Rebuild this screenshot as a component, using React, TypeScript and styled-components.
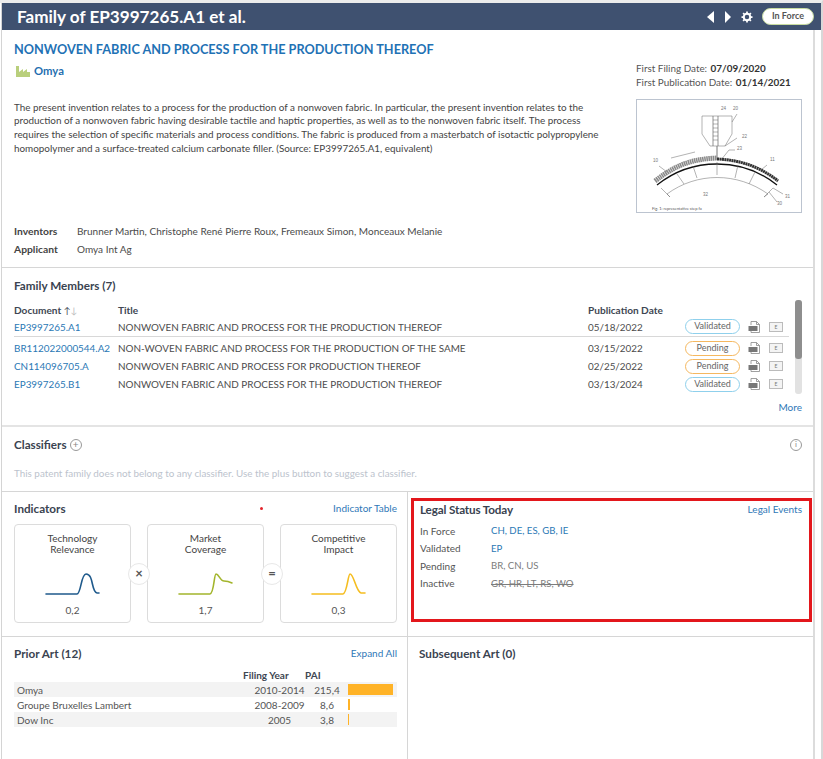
import React from "react";
import styled, {createGlobalStyle} from "styled-components";

const GlobalStyle = createGlobalStyle`
  html, body {
    margin: 0;
    padding: 0;
    background: #fff;
  }
  body {
    font-family: Lato, "Open Sans", sans-serif;
    font-size: 10px;
    color: #4a4a4a;
    overflow: hidden;
  }
`;

const members = [
    {doc: "EP3997265.A1", title: "NONWOVEN FABRIC AND PROCESS FOR THE PRODUCTION THEREOF", date: "05/18/2022", status: "Validated"},
    {doc: "BR112022000544.A2", title: "NON-WOVEN FABRIC AND PROCESS FOR THE PRODUCTION OF THE SAME", date: "03/15/2022", status: "Pending"},
    {doc: "CN114096705.A", title: "NONWOVEN FABRIC AND PROCESS FOR PRODUCTION THEREOF", date: "02/25/2022", status: "Pending"},
    {doc: "EP3997265.B1", title: "NONWOVEN FABRIC AND PROCESS FOR THE PRODUCTION THEREOF", date: "03/13/2024", status: "Validated"},
];

const priorArt = [
    {name: "Omya", years: "2010-2014", pai: "215,4", bar: 45},
    {name: "Groupe Bruxelles Lambert", years: "2008-2009", pai: "8,6", bar: 2},
    {name: "Dow Inc", years: "2005", pai: "3,8", bar: 1},
];

const indicators = [
    {title: "Technology", sub: "Relevance", value: "0,2", color: "#1f5a8c", path: "M1 22 H32 C36 22 36 2 41 2 C49 2 46 20 52 21 H54"},
    {title: "Market", sub: "Coverage", value: "1,7", color: "#a3b52c", path: "M1 22 H32 C36 22 36 2 38 2 C41 2 42 9 46 9 C50 9 50 9 54 11"},
    {title: "Competitive", sub: "Impact", value: "0,3", color: "#f5bd1f", path: "M1 22 H32 C36 22 37 2 39 2 C43 2 45 20 50 21 H54"},
];

const drawingLabels = [
    {x: 84, y: 10, text: "24"},
    {x: 96, y: 10, text: "20"},
    {x: 105, y: 38, text: "22"},
    {x: 100, y: 50, text: "23"},
    {x: 16, y: 62, text: "10"},
    {x: 133, y: 61, text: "11"},
    {x: 66, y: 96, text: "32"},
    {x: 148, y: 98, text: "31"},
    {x: 140, y: 105, text: "30"},
];

const PdfIcon = () => (
    <svg width="13" height="14" viewBox="0 0 13 14" fill="none" stroke="#888" strokeWidth="0.8">
        <path d="M3 5V1.5H8.5L11.5 4.5V12.5H3V11"/>
        <path d="M8.5 1.5V4.5H11.5"/>
        <rect x="0.5" y="6" width="9" height="5" fill="#777" stroke="none"/>
    </svg>
);

const PatentDrawing = () => (
    <svg width="164" height="112" viewBox="0 0 164 112" fill="none" stroke="#666" strokeWidth="0.5">
        <path d="M65 16H95V34L88 46H73L65 34Z"/>
        <path d="M76 16V46M81 16V46" strokeWidth="0.7"/>
        <path d="M76 20H81M76 24H81M76 28H81M76 32H81M76 36H81M76 40H81"/>
        <path d="M80 46V60" strokeWidth="0.9"/>
        <path d="M84 60L92 50H98M88 46L100 38M95 22L100 14"/>
        <path d="M18 81C42 62 60 59 80 58" stroke="#8a8a8a" strokeWidth="5" strokeDasharray="1.6 0.5"/>
        <path d="M80 59C105 60 125 68 141 81" stroke="#333" strokeWidth="3" strokeDasharray="2 0.4"/>
        <path d="M20 85C55 57 105 57 140 85" stroke="#111" strokeWidth="1.3"/>
        <path d="M30 94C60 72 100 72 131 94"/>
        <path d="M24 88L33 97M40 74L47 84M56 66L60 78M80 62V75M101 65L98 78M118 72L112 84M136 88L127 97"/>
        <path d="M33 97L30 94M127 97L131 94"/>
        <path d="M34 58L58 52" strokeWidth="0.5"/>
        <path d="M22 66L30 72M130 65L124 70M136 88L146 94M132 92L140 102"/>
        {drawingLabels.map((l) => (
            <text key={l.text} x={l.x} y={l.y} fontSize="4.5" fill="#777" stroke="none" fontFamily="Liberation Sans, sans-serif">{l.text}</text>
        ))}
    </svg>
);

const App = () => {
    return (
        <Page>
            <GlobalStyle/>
            <Panel>
                <Header>
                    <HeaderTitle>Family of EP3997265.A1 et al.</HeaderTitle>
                    <HeaderTools>
                        <Arrow $left/>
                        <Arrow/>
                        <Gear viewBox="0 0 24 24" fill="none" stroke="#fff" strokeWidth="4">
                            <circle cx="12" cy="12" r="6.5"/>
                            <path d="M12 1V5M12 19V23M1 12H5M19 12H23M4.2 4.2L7 7M17 17L19.8 19.8M4.2 19.8L7 17M17 7L19.8 4.2" strokeWidth="3.5"/>
                        </Gear>
                        <StatusPill>In Force</StatusPill>
                    </HeaderTools>
                </Header>

                <Overview>
                    <OverviewMain>
                        <PatentTitle>NONWOVEN FABRIC AND PROCESS FOR THE PRODUCTION THEREOF</PatentTitle>
                        <Owner>
                            <svg width="14" height="11" viewBox="0 0 14 11" fill="#b9cf7c">
                                <path d="M0 0H3V6L7 3V6L11 3V6H14V11H0Z"/>
                            </svg>
                            Omya
                        </Owner>
                        <Abstract>
                            The present invention relates to a process for the production of a nonwoven fabric. In particular, the present invention relates to the production of a nonwoven fabric having desirable tactile and haptic properties, as well as to the nonwoven fabric itself. The process requires the selection of specific materials and process conditions. The fabric is produced from a masterbatch of isotactic polypropylene homopolymer and a surface-treated calcium carbonate filler. (Source: EP3997265.A1, equivalent)
                        </Abstract>
                        <Facts>
                            <FactLabel>Inventors</FactLabel>
                            <span>Brunner Martin, Christophe René Pierre Roux, Fremeaux Simon, Monceaux Melanie</span>
                            <FactLabel>Applicant</FactLabel>
                            <span>Omya Int Ag</span>
                        </Facts>
                    </OverviewMain>
                    <OverviewSide>
                        <DateLine>First Filing Date: <b>07/09/2020</b></DateLine>
                        <DateLine>First Publication Date: <b>01/14/2021</b></DateLine>
                        <Drawing>
                            <PatentDrawing/>
                            <DrawingCaption>Fig. 1: representative step fa</DrawingCaption>
                        </Drawing>
                    </OverviewSide>
                </Overview>

                <Members>
                    <SectionTitle>Family Members (7)</SectionTitle>
                    <TableWrap>
                        <MemberTable>
                            <HeadRow>
                                <span>Document <SortArrows>↑<i>↓</i></SortArrows></span>
                                <span>Title</span>
                                <span>Publication Date</span>
                            </HeadRow>
                            {members.map((m, i) => (
                                <MemberRow key={m.doc} $first={i === 0}>
                                    <DocLink>{m.doc}</DocLink>
                                    <span>{m.title}</span>
                                    <span>{m.date}</span>
                                    <StatusBadge $pending={m.status === "Pending"}>{m.status}</StatusBadge>
                                    <PdfIcon/>
                                    <EBox>E</EBox>
                                </MemberRow>
                            ))}
                        </MemberTable>
                        <ScrollTrack><ScrollThumb/></ScrollTrack>
                    </TableWrap>
                    <MoreRow><TextLink>More</TextLink></MoreRow>
                </Members>

                <Classifiers>
                    <ClassifierHead>
                        <SectionTitle>Classifiers</SectionTitle>
                        <RoundIcon>+</RoundIcon>
                        <InfoIcon>i</InfoIcon>
                    </ClassifierHead>
                    <Muted>This patent family does not belong to any classifier. Use the plus button to suggest a classifier.</Muted>
                </Classifiers>

                <TwoColumns>
                    <IndicatorPanel>
                        <PanelHead>
                            <SectionTitle>Indicators</SectionTitle>
                            <RedDot/>
                            <TextLink>Indicator Table</TextLink>
                        </PanelHead>
                        <Cards>
                            {indicators.map((item, i) => (
                                <React.Fragment key={item.title}>
                                    {i > 0 && <Operator>{i === 1 ? "×" : "="}</Operator>}
                                    <Card>
                                        <CardTitle>{item.title}<br/>{item.sub}</CardTitle>
                                        <Sparkline viewBox="0 0 60 25" fill="none">
                                            <path d={item.path} stroke={item.color} strokeWidth="1.6" strokeLinecap="round"/>
                                        </Sparkline>
                                        <CardValue>{item.value}</CardValue>
                                    </Card>
                                </React.Fragment>
                            ))}
                        </Cards>
                    </IndicatorPanel>
                    <LegalPanel>
                        <LegalBox>
                            <PanelHead>
                                <LegalTitle>Legal Status Today</LegalTitle>
                                <TextLink>Legal Events</TextLink>
                            </PanelHead>
                            <LegalGrid>
                                <span>In Force</span><LegalLink>CH, DE, ES, GB, IE</LegalLink>
                                <span>Validated</span><LegalLink>EP</LegalLink>
                                <span>Pending</span><LegalGrey>BR, CN, US</LegalGrey>
                                <span>Inactive</span><LegalGrey as="s">GR, HR, LT, RS, WO</LegalGrey>
                            </LegalGrid>
                        </LegalBox>
                    </LegalPanel>
                </TwoColumns>

                <BottomColumns>
                    <PriorPanel>
                        <PanelHead>
                            <SectionTitle>Prior Art (12)</SectionTitle>
                            <TextLink>Expand All</TextLink>
                        </PanelHead>
                        <PriorHead>
                            <span/>
                            <b>Filing Year</b>
                            <b>PAI</b>
                        </PriorHead>
                        {priorArt.map((p) => (
                            <PriorRow key={p.name}>
                                <span>{p.name}</span>
                                <PriorCell>{p.years}</PriorCell>
                                <PriorCell>{p.pai}</PriorCell>
                                <PaiBar style={{width: p.bar}}/>
                            </PriorRow>
                        ))}
                    </PriorPanel>
                    <SubsequentPanel>
                        <SectionTitle>Subsequent Art (0)</SectionTitle>
                    </SubsequentPanel>
                </BottomColumns>
            </Panel>
        </Page>
    );
};

export default App;

const Page = styled.div`
  width: 823px;
  height: 759px;
  border-top: 3px solid #ececec;
  border-right: 2px solid #d8d8d8;
  padding-left: 1px;
  box-sizing: border-box;
  overflow: hidden;
`;

const Panel = styled.div`
  width: 811px;
  height: 756px;
  border-left: 1px solid #d4d4d4;
  border-right: 2px solid #dcdcdc;
`;

const Header = styled.div`
  height: 27px;
  width: 821px;
  background: #3f5170;
  display: flex;
  align-items: center;
  justify-content: space-between;
  padding: 0 9px 0 15px;
  box-sizing: border-box;
`;

const HeaderTitle = styled.div`
  font-size: 17.1px;
  font-weight: 700;
  color: #fff;
`;

const HeaderTools = styled.div`
  display: flex;
  align-items: center;
`;

const Arrow = styled.div<{$left?: boolean}>`
  width: 0;
  height: 0;
  border-top: 6px solid transparent;
  border-bottom: 6px solid transparent;
  margin-right: ${(p) => (p.$left ? "11px" : "10px")};
  ${(p) => (p.$left ? "border-right: 7px solid #fff;" : "border-left: 6px solid #fff;")}
`;

const Gear = styled.svg`
  width: 12px;
  height: 12px;
  margin-right: 9px;
`;

const StatusPill = styled.div`
  width: 52px;
  height: 17px;
  border-radius: 9px;
  background: #fff;
  border: 1.5px solid #c8dca0;
  box-sizing: border-box;
  font-size: 9px;
  font-weight: 700;
  color: #555;
  text-align: center;
  line-height: 13px;
`;

const Overview = styled.div`
  height: 237px;
  border-bottom: 1px solid #d6d6d6;
  display: flex;
  padding: 0 11px 0 12px;
`;

const OverviewMain = styled.div`
  flex: 1;
  display: flex;
  flex-direction: column;
  min-width: 0;
`;

const PatentTitle = styled.div`
  margin-top: 12px;
  font-size: 12.7px;
  font-weight: 700;
  line-height: 15px;
  color: #1f72b5;
  white-space: nowrap;
`;

const Owner = styled.div`
  margin-top: 7px;
  display: flex;
  align-items: center;
  gap: 4px;
  padding-left: 2px;
  font-size: 11.3px;
  font-weight: 700;
  line-height: 14px;
  color: #1f6fb0;
`;

const Abstract = styled.p`
  margin: 22.5px 0 0;
  width: 592px;
  font-size: 9.9px;
  line-height: 13.8px;
  color: #444;
`;

const Facts = styled.div`
  margin-top: auto;
  margin-bottom: 11px;
  display: grid;
  grid-template-columns: 63px 1fr;
  row-gap: 5px;
  font-size: 10px;
  word-spacing: 0.1px;
  line-height: 13px;
`;

const FactLabel = styled.span`
  font-size: 10.3px;
  font-weight: 700;
  color: #444;
`;

const OverviewSide = styled.div`
  width: 166px;
  padding-top: 32px;
`;

const DateLine = styled.div`
  font-size: 9.9px;
  line-height: 13.5px;
  white-space: nowrap;
  color: #555;
  b {
    color: #333;
    margin-left: 1px;
  }
`;

const Drawing = styled.div`
  position: relative;
  margin-top: 10px;
  width: 166px;
  height: 114px;
  border: 1px solid #bcc4d0;
  box-sizing: border-box;
`;

const DrawingCaption = styled.span`
  position: absolute;
  left: 15px;
  bottom: 1px;
  font-size: 4px;
  color: #555;
`;

const SectionTitle = styled.div`
  font-size: 11.7px;
  font-weight: 700;
  line-height: 15px;
  color: #3a4350;
  white-space: nowrap;
`;

const LegalTitle = styled(SectionTitle)`
  letter-spacing: -0.15px;
`;

const Members = styled.div`
  height: 159px;
  border-bottom: 2px solid #e4e4e4;
  padding: 10px 11px 0 12px;
  box-sizing: border-box;
`;

const TableWrap = styled.div`
  display: flex;
  justify-content: space-between;
  margin-top: 10px;
`;

const MemberTable = styled.div`
  width: 775px;
  font-size: 9.9px;
`;

const HeadRow = styled.div`
  display: grid;
  grid-template-columns: 104px 470px 1fr;
  height: 14px;
  line-height: 14px;
  font-size: 10.1px;
  font-weight: 700;
  color: #3e4652;
`;

const SortArrows = styled.span`
  font-weight: 400;
  font-size: 9px;
  i {
    font-style: normal;
    color: #bbb;
  }
`;

const MemberRow = styled.div<{$first?: boolean}>`
  display: grid;
  grid-template-columns: 104px 470px 97px 63px 21px 1fr;
  align-items: center;
  height: ${(p) => (p.$first ? "20px" : "18px")};
  box-sizing: border-box;
  ${(p) => (p.$first ? "border-bottom: 1px solid #d8d8d8; margin-bottom: 2px;" : "")}
  white-space: nowrap;
  color: #4c4c4c;
`;

const DocLink = styled.span`
  color: #2a78b5;
`;

const StatusBadge = styled.span<{$pending?: boolean}>`
  width: 55px;
  height: 15px;
  border-radius: 8px;
  box-sizing: border-box;
  border: 1.5px solid ${(p) => (p.$pending ? "#f5b860" : "#8fd0ec")};
  font-size: 9px;
  line-height: 12px;
  text-align: center;
  color: #666;
`;

const EBox = styled.span`
  width: 12px;
  height: 8px;
  border: 1px solid #bbb;
  background: #f4f4f4;
  font-size: 5px;
  line-height: 8px;
  text-align: center;
  color: #777;
`;

const ScrollTrack = styled.div`
  width: 7px;
  height: 94px;
  margin-top: -3px;
  background: #e2e2e2;
  border-radius: 3px;
`;

const ScrollThumb = styled.div`
  height: 59px;
  background: #8e8e8e;
  border-radius: 3px;
`;

const MoreRow = styled.div`
  display: flex;
  justify-content: flex-end;
  margin-top: 7px;
`;

const TextLink = styled.span`
  font-size: 10px;
  line-height: 13px;
  color: #2f78b7;
`;

const Classifiers = styled.div`
  height: 65px;
  border-bottom: 1px solid #d6d6d6;
  padding: 10px 11px 0 12px;
  box-sizing: border-box;
`;

const ClassifierHead = styled.div`
  display: flex;
  align-items: center;
  gap: 3px;
`;

const RoundIcon = styled.span`
  width: 10px;
  height: 10px;
  border: 1px solid #999;
  border-radius: 50%;
  font-size: 10px;
  line-height: 9px;
  text-align: center;
  color: #888;
`;

const InfoIcon = styled(RoundIcon)`
  margin-left: auto;
  font-size: 8px;
`;

const Muted = styled.div`
  margin-top: 15px;
  font-size: 9.85px;
  color: #bcc3cd;
  white-space: nowrap;
`;

const TwoColumns = styled.div`
  display: grid;
  grid-template-columns: 406px 1fr;
  height: 144px;
  border-bottom: 1px solid #d6d6d6;
`;

const IndicatorPanel = styled.div`
  border-right: 1px solid #d6d6d6;
  padding: 9px 10px 0 12px;
`;

const PanelHead = styled.div`
  display: flex;
  justify-content: space-between;
  align-items: center;
`;

const RedDot = styled.span`
  width: 3px;
  height: 3px;
  margin-left: 124px;
  border-radius: 50%;
  background: #e3242b;
`;

const Cards = styled.div`
  display: flex;
  align-items: center;
  margin-top: 8px;
`;

const Card = styled.div`
  width: 117px;
  height: 99px;
  box-sizing: border-box;
  border: 1px solid #dcdcdc;
  border-radius: 4px;
  padding-top: 8px;
  display: flex;
  flex-direction: column;
  align-items: center;
`;

const CardTitle = styled.div`
  height: 39px;
  font-size: 10px;
  line-height: 11px;
  text-align: center;
  color: #444;
`;

const Sparkline = styled.svg`
  width: 60px;
  height: 25px;
  margin-left: 4px;
`;

const CardValue = styled.div`
  margin-top: 7px;
  color: #555;
`;

const Operator = styled.div`
  width: 22px;
  height: 22px;
  margin: 0 -3px;
  z-index: 1;
  border-radius: 50%;
  background: #fff;
  border: 1px solid #e8e8e8;
  box-sizing: border-box;
  font-size: 13px;
  font-weight: 700;
  line-height: 19px;
  text-align: center;
  color: #555;
`;

const LegalPanel = styled.div`
  padding: 6px 1px 12px 3px;
`;

const LegalBox = styled.div`
  height: 124px;
  box-sizing: border-box;
  border: 3px solid #e3171c;
  padding: 1px 7px 0 6px;
`;

const LegalGrid = styled.div`
  display: grid;
  grid-template-columns: 71px 1fr;
  grid-auto-rows: 17.5px;
  margin-top: 5px;
  align-items: center;
  color: #555;
`;

const LegalLink = styled.span`
  font-size: 9.6px;
  color: #2a78b5;
`;

const LegalGrey = styled.span`
  font-size: 9.6px;
  color: #7c7c7c;
`;

const BottomColumns = styled.div`
  display: grid;
  grid-template-columns: 406px 1fr;
  height: 124px;
`;

const PriorPanel = styled.div`
  border-right: 1px solid #d6d6d6;
  padding: 9px 10px 0 12px;
`;

const PriorHead = styled.div`
  display: grid;
  grid-template-columns: 229px 62px 1fr;
  margin-top: 7px;
  line-height: 14px;
  color: #3e4652;
`;

const PriorRow = styled.div`
  display: grid;
  grid-template-columns: 232px 61px 34px 1fr;
  align-items: center;
  height: 15px;
  padding-left: 3px;
  color: #555;
  &:nth-of-type(odd) {
    background: #f3f3f3;
  }
`;

const PriorCell = styled.span`
  text-align: center;
`;

const PaiBar = styled.span`
  height: 11px;
  margin-left: 4px;
  background: #ffb327;
`;

const SubsequentPanel = styled.div`
  padding: 9px 12px 0 11px;
`;
